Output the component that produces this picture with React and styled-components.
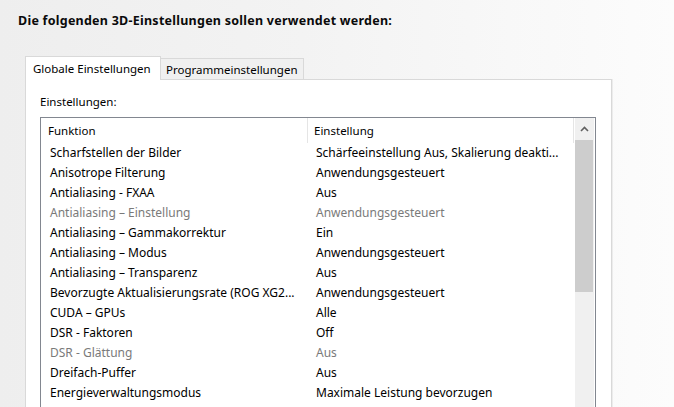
import React from "react";
import styled, { createGlobalStyle } from "styled-components";

const GlobalStyle = createGlobalStyle`
  html, body { margin: 0; padding: 0; }
  body { font-family: "Noto Sans", "Open Sans", sans-serif; }
`;

const Page = styled.div`
  width: 674px;
  height: 407px;
  overflow: hidden;
  box-sizing: border-box;
  padding-top: 13px;
  background: linear-gradient(90deg, #eeeeee 0%, #f3f3f3 45%, #fcfcfc 100%);
  display: flex;
  flex-direction: column;
  font-size: 11.5px;
  color: #111;
`;

const Title = styled.div`
  padding-left: 18px;
  font-weight: 700;
  font-size: 12.5px;
  letter-spacing: 0.25px;
  line-height: 16px;
  color: #0a0a0a;
  margin-bottom: 27px;
  white-space: nowrap;
`;

const TabStrip = styled.div`
  display: flex;
  align-items: flex-end;
  margin-left: 25px;
  height: 23px;
`;

const Tab = styled.div`
  box-sizing: border-box;
  width: ${(p) => p.$w}px;
  height: ${(p) => (p.$active ? 24 : 21)}px;
  padding-left: ${(p) => (p.$active ? 7 : 5)}px;
  ${(p) => (p.$active ? "margin-bottom: -1px; position: relative; z-index: 1;" : "")}
  background: ${(p) => (p.$active ? "#ffffff" : "#f0f0f0")};
  border: 1px solid #d9d9d9;
  border-bottom: none;
  ${(p) => (p.$active ? "" : "border-left: none;")}
  display: flex;
  align-items: center;
  padding-bottom: ${(p) => (p.$active ? 1 : 0)}px;
  white-space: nowrap;
  color: #000;
`;

const Panel = styled.div`
  margin-left: 25px;
  width: 587px;
  flex: 1;
  box-sizing: border-box;
  background: #fff;
  border: 1px solid #d9d9d9;
  border-bottom: none;
  box-shadow: 1px 0 0 #ececec;
  padding: 14px 0 0 14px;
  display: flex;
  flex-direction: column;
`;

const Label = styled.div`
  line-height: 16px;
  margin-bottom: 7px;
  color: #000;
`;

const ListBox = styled.div`
  width: 556px;
  flex: 1;
  box-sizing: border-box;
  border: 1px solid #828790;
  border-bottom: none;
  display: flex;
  background: #fff;
`;

const ListBody = styled.div`
  width: 533px;
  display: flex;
  flex-direction: column;
`;

const Row = styled.div`
  display: grid;
  grid-template-columns: 267px 266px;
  height: ${(p) => (p.$head ? 25 : 20)}px;
  line-height: ${(p) => (p.$head ? 25 : 20)}px;
  font-size: ${(p) => (p.$head ? 11.5 : 12)}px;
`;

const HeadCell = styled.div`
  box-sizing: border-box;
  padding-left: ${(p) => p.$pad}px;
  border-right: 1px solid #e5e5e5;
  color: #000;
  white-space: nowrap;
`;

const Cell = styled.div`
  box-sizing: border-box;
  padding-left: ${(p) => p.$pad}px;
  color: ${(p) => (p.$disabled ? "#7a7a7a" : "#000")};
  white-space: nowrap;
  overflow: hidden;
`;

const ScrollBar = styled.div`
  width: 19px;
  margin: 0 1px;
  display: flex;
  flex-direction: column;
  background: #f0f0f0;
`;

const UpButton = styled.div`
  height: 22px;
  display: flex;
  align-items: center;
  justify-content: center;
  background: #f0f0f0;
`;

const Thumb = styled.div`
  height: 152px;
  background: #cdcdcd;
  margin: 0 1px 0 0;
`;

const rows = [
  ["Scharfstellen der Bilder", "Schärfeeinstellung Aus, Skalierung deakti..."],
  ["Anisotrope Filterung", "Anwendungsgesteuert"],
  ["Antialiasing - FXAA", "Aus"],
  ["Antialiasing – Einstellung", "Anwendungsgesteuert", true],
  ["Antialiasing – Gammakorrektur", "Ein"],
  ["Antialiasing – Modus", "Anwendungsgesteuert"],
  ["Antialiasing – Transparenz", "Aus"],
  ["Bevorzugte Aktualisierungsrate (ROG XG2...", "Anwendungsgesteuert"],
  ["CUDA – GPUs", "Alle"],
  ["DSR - Faktoren", "Off"],
  ["DSR - Glättung", "Aus", true],
  ["Dreifach-Puffer", "Aus"],
  ["Energieverwaltungsmodus", "Maximale Leistung bevorzugen"],
];

export default function App() {
  return (
    <>
      <GlobalStyle />
      <Page>
        <Title>Die folgenden 3D-Einstellungen sollen verwendet werden:</Title>
        <TabStrip>
          <Tab $active $w={136}>Globale Einstellungen</Tab>
          <Tab $w={143}>Programmeinstellungen</Tab>
        </TabStrip>
        <Panel>
          <Label>Einstellungen:</Label>
          <ListBox>
            <ListBody>
              <Row $head>
                <HeadCell $pad={7}>Funktion</HeadCell>
                <HeadCell $pad={6}>Einstellung</HeadCell>
              </Row>
              {rows.map(([f, v, d]) => (
                <Row key={f}>
                  <Cell $pad={9} $disabled={d}>{f}</Cell>
                  <Cell $pad={8} $disabled={d}>{v}</Cell>
                </Row>
              ))}
            </ListBody>
            <ScrollBar>
              <UpButton>
                <svg width="9" height="6" viewBox="0 0 9 6">
                  <path d="M1 5 L4.5 1.5 L8 5" fill="none" stroke="#606060" strokeWidth="1.6" />
                </svg>
              </UpButton>
              <Thumb />
            </ScrollBar>
          </ListBox>
        </Panel>
      </Page>
    </>
  );
}
